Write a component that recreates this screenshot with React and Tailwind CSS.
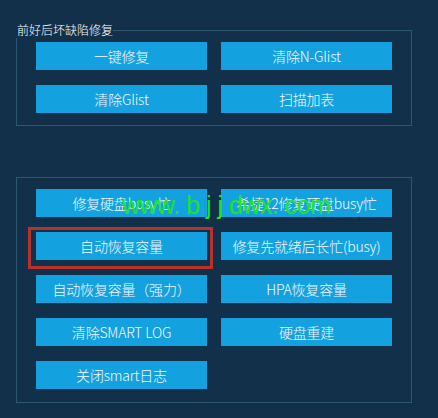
import React from "react";

const groupOne = ["一键修复", "清除N-Glist", "清除Glist", "扫描加表"];

const groupTwo = [
  "修复硬盘busy忙",
  "希捷12修复硬盘busy忙",
  "自动恢复容量",
  "修复先就绪后长忙(busy)",
  "自动恢复容量（强力）",
  "HPA恢复容量",
  "清除SMART LOG",
  "硬盘重建",
  "关闭smart日志",
];

const font = { fontFamily: '"Noto Sans CJK SC", "Noto Sans", sans-serif' };

// Flat blue action button
const ActionButton = ({ label, highlighted }) => (
  <div className="relative">
    {highlighted && (
      <div className="absolute -left-[8px] -top-[5px] w-[185px] h-[42px] border-[3px] border-[#b8322b] pointer-events-none" />
    )}
    <button className="w-full h-[28px] bg-[#14a1df] text-[#f4f9fc] text-[14px] font-light leading-none flex items-center justify-center whitespace-nowrap tracking-[-0.2px]">
      {label}
    </button>
  </div>
);

export default function App() {
  return (
    <div
      className="relative w-[438px] h-[418px] bg-[#12304a] pt-[22px] pl-[16px] pr-[26px] overflow-hidden"
      style={font}
    >
      {/* First group */}
      <fieldset className="border border-[#2c5873] h-[104px] px-[19px] pb-[12px]">
        <legend className="text-[12px] font-light leading-[16px] text-white -ml-[20px] pl-[1px]">
          前好后坏缺陷修复
        </legend>
        <div className="grid grid-cols-2 gap-x-[14px] gap-y-[15px] mt-[4px]">
          {groupOne.map((label) => (
            <ActionButton key={label} label={label} />
          ))}
        </div>
      </fieldset>

      {/* Second group */}
      <div className="mt-[51px] border border-[#2c5873] h-[226px] px-[19px] pt-[11px]">
        <div className="grid grid-cols-2 gap-x-[14px] gap-y-[15px]">
          {groupTwo.map((label) => (
            <ActionButton
              key={label}
              label={label}
              highlighted={label === "自动恢复容量"}
            />
          ))}
        </div>
      </div>

      {/* Watermark */}
      <div
        className="absolute left-[122px] top-[191px] text-[25px] leading-[28px] text-[#1fe41f] whitespace-nowrap pointer-events-none tracking-[-0.5px]"
        style={{ fontFamily: '"Liberation Sans", sans-serif' }}
      >
        www. b j j dwx. com
      </div>
    </div>
  );
}
